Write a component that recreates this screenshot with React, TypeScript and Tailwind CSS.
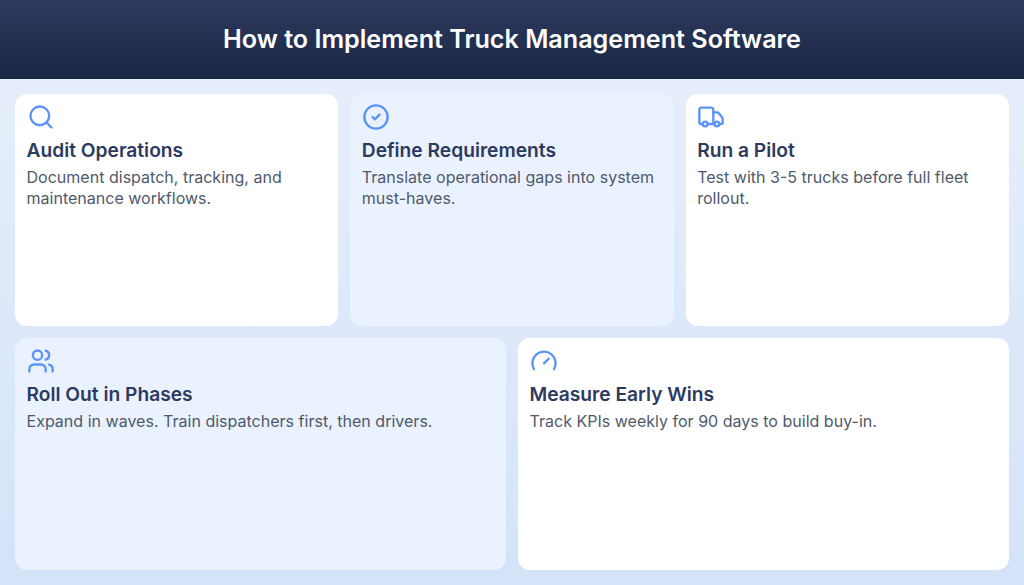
import React from 'react';
import { Search, CircleCheck, Truck, Users, Gauge, LucideIcon } from 'lucide-react';

interface Step {
  icon: LucideIcon;
  title: string;
  text: string;
  tinted: boolean;
  span: string;
}

const steps: Step[] = [
  { icon: Search, title: 'Audit Operations', text: 'Document dispatch, tracking, and maintenance workflows.', tinted: false, span: 'col-span-2' },
  { icon: CircleCheck, title: 'Define Requirements', text: 'Translate operational gaps into system must-haves.', tinted: true, span: 'col-span-2' },
  { icon: Truck, title: 'Run a Pilot', text: 'Test with 3-5 trucks before full fleet rollout.', tinted: false, span: 'col-span-2' },
  { icon: Users, title: 'Roll Out in Phases', text: 'Expand in waves. Train dispatchers first, then drivers.', tinted: true, span: 'col-span-3' },
  { icon: Gauge, title: 'Measure Early Wins', text: 'Track KPIs weekly for 90 days to build buy-in.', tinted: false, span: 'col-span-3' },
];

const App: React.FC = () => {
  return (
    <div className="flex h-[585px] w-[1024px] flex-col overflow-hidden bg-gradient-to-b from-[#e9f0fb] to-[#d3e3f8] font-['Inter',sans-serif]">
      <header className="flex h-[79px] items-center justify-center bg-gradient-to-b from-[#2d3a5f] to-[#1c2744]">
        <h1 className="text-[25.15px] font-semibold text-white">How to Implement Truck Management Software</h1>
      </header>
      <main className="grid flex-1 grid-cols-6 grid-rows-2 gap-3 p-[15px]">
        {steps.map((step) => {
          const Icon = step.icon;
          return (
            <div
              key={step.title}
              className={`${step.span} rounded-xl px-[11.5px] pt-[9px] ${step.tinted ? 'bg-[#ebf2ff]' : 'bg-white'}`}
            >
              <Icon className="h-7 w-7 text-[#5b94f5]" strokeWidth={2} />
              <h2 className="mt-[5px] text-[19.2px] leading-[28px] font-semibold text-[#2d3a5f]">{step.title}</h2>
              <p className="mt-[3px] text-[16.05px] leading-[21px] text-[#4f5a6b]">{step.text}</p>
            </div>
          );
        })}
      </main>
    </div>
  );
};

export default App;
